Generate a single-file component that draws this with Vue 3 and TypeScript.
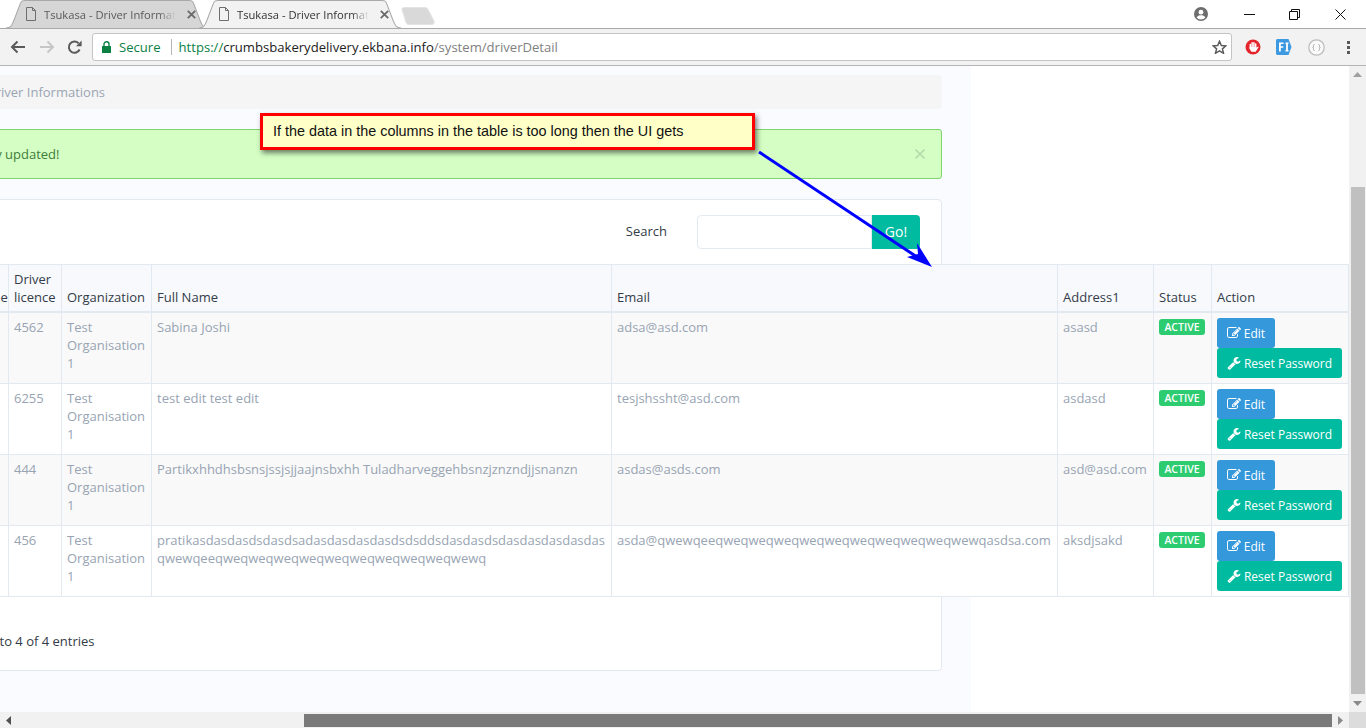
<script setup lang="ts">
interface Driver {
  no: number
  phone: string
  licence: string
  organization: string
  fullName: string
  email: string
  address: string
}

const drivers: Driver[] = [
  { no: 1, phone: '98', licence: '4562', organization: 'Test Organisation 1', fullName: 'Sabina Joshi', email: 'adsa@asd.com', address: 'asasd' },
  { no: 2, phone: '98', licence: '6255', organization: 'Test Organisation 1', fullName: 'test edit test edit', email: 'tesjshssht@asd.com', address: 'asdasd' },
  { no: 3, phone: '98', licence: '444', organization: 'Test Organisation 1', fullName: 'Partikxhhdhsbsnsjssjsjjaajnsbxhh Tuladharveggehbsnzjznzndjjsnanzn', email: 'asdas@asds.com', address: 'asd@asd.com' },
  { no: 4, phone: '98', licence: '456', organization: 'Test Organisation 1', fullName: 'pratikasdasdasdsdasdsadasdasdasdasdsdsddsdasdasdsdasdasdasdasdas qwewqeeqweqweqweqweqweqweqweqweqweqwewq', email: 'asda@qwewqeeqweqweqweqweqweqweqweqweqweqwewqasdsa.com', address: 'aksdjsakd' }
]

const wrench = 'M448 1472q0-26-19-45t-45-19-45 19-19 45 19 45 45 19 45-19 19-45zm644-420l-682 682q-37 37-90 37-52 0-91-37l-106-108q-38-36-38-90 0-53 38-91l681-681q39 98 114.5 173.5t173.5 114.5zm634-435q0 39-23 106-47 134-164.5 217.5t-258.5 83.5q-185 0-316.5-131.5t-131.5-316.5 131.5-316.5 316.5-131.5q58 0 121.5 16.5t107.5 46.5q16 11 16 28t-16 28l-293 169v224l193 107q5-3 79-48.5t135.5-81 70.5-35.5q15 0 23.5 10t8.5 25z'
const pencil = 'M888 1184l116-116-152-152-116 116v56h96v96h56zm440-720q-16-16-33 1l-350 350q-17 17-1 33t33-1l350-350q17-17 1-33zm80 594v190q0 119-84.5 203.5t-203.5 84.5h-832q-119 0-203.5-84.5t-84.5-203.5v-832q0-119 84.5-203.5t203.5-84.5h832q63 0 117 25 15 7 18 23 3 17-9 29l-49 49q-14 14-32 8-23-6-45-6h-832q-66 0-113 47t-47 113v832q0 66 47 113t113 47h832q66 0 113-47t47-113v-126q0-13 9-22l64-64q15-15 35-7t20 29zm-96-738l288 288-672 672h-288v-288zm444 132l-92 92-288-288 92-92q28-28 68-28t68 28l152 152q28 28 28 68t-28 68z'
</script>

<template>
  <div class="browser">
    <div class="tabstrip">
      <div v-for="(t, i) in [0, 1]" :key="t" :class="['tab', i === 1 ? 'active' : '']">
        <svg class="tab-shape" viewBox="0 0 200 28" preserveAspectRatio="none">
          <path d="M0 28 C5 28 6 25 8 20 L14 4 C15 1 16 0.5 19 0.5 L181 0.5 C184 0.5 185 1 186 4 L192 20 C194 25 195 28 200 28" />
        </svg>
        <svg class="doc" width="12" height="14" viewBox="0 0 12 14" fill="none" stroke="#6e6e6e">
          <path d="M1.5 .5h6l3 3v10h-9zM7.5 .5v3h3" />
        </svg>
        <span class="tab-title">Tsukasa - Driver Informat</span>
        <svg class="tab-x" width="9" height="9" viewBox="0 0 9 9" stroke="#6a6a6a" stroke-width="1.8">
          <path d="M.8 .8l7.4 7.4M8.2 .8L.8 8.2" />
        </svg>
      </div>
      <svg class="newtab" width="34" height="18" viewBox="0 0 34 18">
        <path d="M1 2.5C1 1 2 .5 3 .5H24c1.500 0 2 .5 3 2L33 14c.8 2-.5 3.500-2 3.500H8c-1.500 0-2.200-.5-3-2z" fill="#d9d9d9" stroke="#e4e4e4" />
      </svg>
      <div class="window-ctrls">
        <svg class="account" width="14" height="14" viewBox="0 0 14 14">
          <circle cx="7" cy="7" r="7" fill="#6e6e6e" />
          <circle cx="7" cy="5.200" r="2.400" fill="#fff" />
          <path d="M2.600 10.500C3.500 8.800 5.200 8.300 7 8.300s3.500.5 4.400 2.200C10.300 11.800 8.800 12.400 7 12.400s-3.300-.6-4.400-1.900z" fill="#fff" />
        </svg>
        <svg class="min" width="11" height="11" viewBox="0 0 11 11" stroke="#111"><path d="M0 5.500h11" /></svg>
        <svg class="restore" width="11" height="11" viewBox="0 0 11 11" fill="none" stroke="#111"><path d="M.5 2.500h8v8h-8zM2.500 2.500v-2h8v8h-2" /></svg>
        <svg class="close" width="11" height="11" viewBox="0 0 11 11" stroke="#111"><path d="M.5 .5l10 10M10.500 .5l-10 10" /></svg>
      </div>
    </div>

    <div class="toolbar">
      <svg class="nav" width="16" height="14" viewBox="0 0 16 14" fill="none" stroke="#5a5a5a" stroke-width="2">
        <path d="M15 7H2M7.500 1.500L2 7l5.500 5.500" />
      </svg>
      <svg class="nav fwd" width="16" height="14" viewBox="0 0 16 14" fill="none" stroke="#c6c6c6" stroke-width="2">
        <path d="M1 7h13M8.500 1.500L14 7l-5.500 5.500" />
      </svg>
      <svg class="nav" width="15" height="15" viewBox="0 0 15 15" fill="none">
        <path d="M12.600 9.500A5.600 5.600 0 1 1 11.500 3.300" stroke="#5a5a5a" stroke-width="2" />
        <path d="M9 6.200h5.600V.6z" fill="#5a5a5a" />
      </svg>
      <div class="omnibox">
        <svg class="lock" width="9" height="12" viewBox="0 0 9 12">
          <path d="M0 5h9v7H0z" fill="#0b8043" />
          <path d="M2 5V3.200a2.500 2.500 0 0 1 5 0V5" fill="none" stroke="#0b8043" stroke-width="1.400" />
        </svg>
        <span class="secure">Secure</span>
        <span class="omni-sep"></span>
        <span class="url"><span class="proto">https://</span><span class="host">crumbsbakerydelivery.ekbana.info</span><span class="path">/system/driverDetail</span></span>
        <svg class="star" width="15" height="14" viewBox="0 0 24 23" fill="none" stroke="#5a5a5a" stroke-width="2.400">
          <path d="M12 2l3 7 7.500.6-5.700 4.900 1.800 7.300L12 18l-6.600 3.800 1.800-7.300L1.500 9.600 9 9z" />
        </svg>
      </div>
      <svg class="ext opera" width="16" height="16" viewBox="0 0 16 16">
        <circle cx="8" cy="8" r="7.500" fill="#e3242b" />
        <path d="M5.300 9V5.500M7.100 8V3.800M8.900 8V3.800M10.700 9V5" stroke="#fff" stroke-width="1.500" stroke-linecap="round" />
        <path d="M4.600 8h6.800v1l1.600-1.600.7.700-3 4.600H6.400L4.600 10z" fill="#fff" />
      </svg>
      <svg class="ext fi" width="16" height="16" viewBox="0 0 16 16">
        <path d="M0 1.500C0 .7.700 0 1.500 0h11l3 8-3 8h-11C.7 16 0 15.300 0 14.500z" fill="#3d9ae0" />
        <path d="M3 3.500h4.500v1.500H4.800v2.300h2.400v1.500H4.800v3.700H3zM9.500 3.500h3V5h-.6v6h.6v1.500h-3V11h.6V5h-.6z" fill="#fff" />
      </svg>
      <svg class="ext json" width="17" height="17" viewBox="0 0 17 17" fill="none">
        <circle cx="8.500" cy="8.500" r="7.700" stroke="#bdbdbd" stroke-width="1.300" fill="#fafafa" />
        <path d="M6.500 5.500c-1.200 0-1 1-1 2 0 .7-.3 1-.8 1 .5 0 .8.300.8 1 0 1-.2 2 1 2M10.500 5.500c1.200 0 1 1 1 2 0 .7.300 1 .8 1-.5 0-.8.300-.8 1 0 1 .2 2-1 2" stroke="#aaa" />
      </svg>
      <div class="menu-dots"><i></i><i></i><i></i></div>
    </div>

    <div class="viewport">
      <div class="page">
        <div class="breadcrumb">Home / Driver Informations</div>
        <div class="alert">
          <span>Successfully updated!</span>
          <svg width="10" height="10" viewBox="0 0 10 10" stroke="#b5dcab" stroke-width="1.600"><path d="M.5 .5l9 9M9.500 .5l-9 9" /></svg>
        </div>
        <div class="card">
          <div class="search-row">
            <label class="search-label">Search</label>
            <input class="search-input" type="text" />
            <button class="go-btn">Go!</button>
          </div>
          <table class="drivers">
            <colgroup>
              <col style="width: 52px" />
              <col style="width: 45px" />
              <col style="width: 53px" />
              <col style="width: 90px" />
              <col style="width: 460px" />
              <col style="width: 446px" />
              <col style="width: 96px" />
              <col style="width: 58px" />
              <col style="width: 137px" />
            </colgroup>
            <thead>
              <tr>
                <th>S.N.</th>
                <th>Phone</th>
                <th>Driver licence</th>
                <th>Organization</th>
                <th>Full Name</th>
                <th>Email</th>
                <th>Address1</th>
                <th>Status</th>
                <th>Action</th>
              </tr>
            </thead>
            <tbody>
              <tr v-for="d in drivers" :key="d.no">
                <td>{{ d.no }}</td>
                <td>{{ d.phone }}</td>
                <td>{{ d.licence }}</td>
                <td>{{ d.organization }}</td>
                <td>{{ d.fullName }}</td>
                <td>{{ d.email }}</td>
                <td>{{ d.address }}</td>
                <td><span class="badge">ACTIVE</span></td>
                <td class="actions">
                  <button class="btn edit">
                    <svg width="14" height="14" viewBox="0 0 1792 1792" fill="currentColor"><path :d="pencil" /></svg>
                    Edit
                  </button>
                  <button class="btn reset">
                    <svg width="14" height="14" viewBox="0 0 1792 1792" fill="currentColor"><path :d="wrench" /></svg>
                    Reset Password
                  </button>
                </td>
              </tr>
            </tbody>
          </table>
          <div class="info">Showing 1 to 4 of 4 entries</div>
        </div>
      </div>

      <div class="callout">If the data in the columns in the table is too long then the UI gets</div>
      <svg class="arrow" width="200" height="130" viewBox="0 0 200 130">
        <path d="M3 3L164 110" stroke="#0000ff" stroke-width="3" fill="none" />
        <path d="M176 118L151 108L162 105L161 94z" fill="#0000ff" />
      </svg>

      <div class="vscroll">
        <svg width="9" height="5" viewBox="0 0 9 5"><path d="M4.500 0L9 5H0z" fill="#a0a0a0" /></svg>
        <div class="vthumb"></div>
        <svg width="9" height="5" viewBox="0 0 9 5"><path d="M0 0h9L4.500 5z" fill="#8a8a8a" /></svg>
      </div>
      <div class="hscroll">
        <svg width="5" height="9" viewBox="0 0 5 9"><path d="M5 0v9L0 4.500z" fill="#505050" /></svg>
        <div class="hthumb"></div>
        <svg width="5" height="9" viewBox="0 0 5 9"><path d="M0 0v9l5-4.500z" fill="#8a8a8a" /></svg>
      </div>
      <div class="corner"></div>
    </div>
  </div>
</template>

<style scoped>
.browser {
  width: 1366px;
  height: 728px;
  display: flex;
  flex-direction: column;
  overflow: hidden;
  font-family: "Open Sans", sans-serif;
  background: #fff;
}

/* tabs */
.tabstrip {
  height: 28px;
  flex: none;
  display: flex;
  align-items: flex-end;
  padding-left: 6px;
  background: #fff;
  position: relative;
}
.tab {
  width: 202px;
  height: 28px;
  margin-right: -9px;
  position: relative;
  display: flex;
  align-items: center;
  padding-left: 26px;
  box-sizing: border-box;
  font-size: 11.200px;
  color: #5a5a5a;
}
.tab.active {
  color: #333;
  z-index: 1;
}
.tab-shape {
  position: absolute;
  left: 0;
  top: 0;
  width: 100%;
  height: 100%;
}
.tab-shape path {
  fill: #d6d6d6;
  stroke: #a9a9a9;
}
.tab.active .tab-shape path {
  fill: #f2f2f2;
}
.doc, .tab-title, .tab-x {
  position: relative;
}
.tab-title {
  width: 132px;
  margin-left: -6px;
  padding-left: 13px;
  white-space: nowrap;
  overflow: hidden;
  -webkit-mask-image: linear-gradient(to right, #000 88%, transparent);
  mask-image: linear-gradient(to right, #000 88%, transparent);
}
.doc {
  flex: none;
  margin-left: -7px;
}
.tab-x {
  margin-left: 11px;
  flex: none;
}
.newtab {
  margin: 0 0 3px 9px;
}
.window-ctrls {
  margin-left: auto;
  align-self: center;
  display: flex;
  align-items: center;
  padding-right: 20px;
}
.account { margin-right: 36px; }
.min { margin-right: 34px; }
.restore { margin-right: 35px; }

/* toolbar */
.toolbar {
  height: 38px;
  flex: none;
  box-sizing: border-box;
  background: #f2f2f2;
  border-top: 1px solid #a9a9a9;
  border-bottom: 1px solid #b4b4b4;
  display: flex;
  align-items: center;
  padding-left: 10px;
}
.nav { margin-right: 13px; flex: none; }
.nav.fwd { margin-right: 12px; }
.omnibox {
  width: 1140px;
  height: 28px;
  margin-left: -3px;
  flex: none;
  box-sizing: border-box;
  display: flex;
  align-items: center;
  background: #fff;
  border: 1px solid #c4c4c4;
  border-radius: 3px;
  padding-left: 9px;
  font-size: 13.100px;
}
.secure { color: #0b8043; margin-left: 8px; }
.omni-sep {
  width: 1px;
  height: 16px;
  background: #b5b5b5;
  margin: 0 7px 0 10px;
}
.url { white-space: nowrap; }
.proto { color: #0b8043; }
.host { color: #222; }
.path { color: #808080; }
.star { margin-left: auto; margin-right: 4px; }
.ext { flex: none; }
.opera { margin-left: 13px; }
.fi { margin-left: 15px; }
.json { margin-left: 16px; }
.menu-dots {
  margin-left: 22px;
  display: flex;
  flex-direction: column;
  gap: 2px;
}
.menu-dots i {
  width: 3px;
  height: 3px;
  background: #5a5a5a;
}

/* page */
.viewport {
  flex: 1;
  position: relative;
  overflow: hidden;
  background: #fff;
}
.page {
  width: 1071px;
  height: 100%;
  margin-left: -100px;
  box-sizing: border-box;
  padding: 9px 29px 0 10px;
  background: #fafbfe;
  font-size: 13px;
  line-height: 18px;
}
.breadcrumb {
  height: 34px;
  box-sizing: border-box;
  padding: 8px 15px 8px 28px;
  background: #f5f5f5;
  border-radius: 4px;
  color: #9aa5b4;
  white-space: nowrap;
}
.alert {
  height: 50px;
  margin-top: 20px;
  box-sizing: border-box;
  padding: 0 16px 0 18px;
  display: flex;
  align-items: center;
  justify-content: space-between;
  background: #d4fec3;
  border: 1px solid #7fd56f;
  border-radius: 3px;
  color: #3f7d3a;
}
.card {
  margin-top: 20px;
  height: 472px;
  box-sizing: border-box;
  background: #fff;
  border: 1px solid #e3e9f1;
  border-radius: 4px;
  padding-top: 15px;
}
.search-row {
  display: flex;
  align-items: center;
  justify-content: flex-end;
  padding-right: 21px;
  height: 34px;
  color: #333c47;
  margin-bottom: 15px;
}
.search-label { margin-right: 30px; padding-bottom: 2px; font-weight: 500; }
.search-input {
  width: 175px;
  height: 34px;
  box-sizing: border-box;
  border: 1px solid #e3e9f1;
  border-radius: 4px 0 0 4px;
  background: #fff;
  outline: none;
}
.go-btn {
  width: 48px;
  height: 34px;
  border: none;
  background: #00bb9f;
  color: #fff;
  font: inherit;
  font-size: 14px;
  border-radius: 0 4px 4px 0;
  padding: 0;
}
.drivers {
  table-layout: fixed;
  width: 1437px;
  border-collapse: collapse;
  color: #98a4b3;
}
.drivers th, .drivers td {
  border: 1px solid #e3e9f1;
  padding: 5px;
  vertical-align: top;
  text-align: left;
}
.drivers th {
  vertical-align: bottom;
  background: #f8f9fd;
  color: #333c47;
  font-weight: 500;
  border-bottom-width: 2px;
}
.drivers tbody tr:nth-child(odd) {
  background: #f9f9f9;
}
.drivers tbody tr:nth-child(even) {
  background: #fff;
}
.badge {
  display: block;
  width: 46px;
  height: 16px;
  margin-top: 1px;
  background: #2ecc71;
  color: #fff;
  border-radius: 3px;
  font-size: 10.500px;
  font-weight: 600;
  line-height: 16px;
  text-align: center;
}
.actions {
  font-size: 0;
}
.btn {
  display: inline-flex;
  align-items: center;
  justify-content: center;
  gap: 3px;
  height: 30px;
  padding: 0;
  border: none;
  border-radius: 3px;
  color: #fff;
  font-family: inherit;
  font-size: 12px;
  vertical-align: top;
}
.btn.edit {
  width: 58px;
  background: #3498db;
}
.btn.reset {
  width: 125px;
  background: #00bb9f;
}
.info {
  margin: 35px 0 0 23px;
  color: #333c47;
  font-weight: 500;
  white-space: nowrap;
}

/* annotation */
.callout {
  position: absolute;
  left: 260px;
  top: 47px;
  width: 495px;
  height: 37px;
  box-sizing: border-box;
  border: 3px solid #ff0000;
  background: #ffffc8;
  box-shadow: 2px 3px 5px rgba(0, 0, 0, 0.5);
  padding: 6px 0 0 10px;
  font-family: "Liberation Sans", Arial, sans-serif;
  font-size: 14.400px;
  line-height: 18px;
  color: #111;
  white-space: nowrap;
}
.arrow {
  position: absolute;
  left: 756px;
  top: 83px;
}

/* scrollbars */
.vscroll {
  position: absolute;
  right: 0;
  top: 0;
  bottom: 16px;
  width: 17px;
  background: #f1f1f1;
  display: flex;
  flex-direction: column;
  align-items: center;
  justify-content: space-between;
  padding: 6px 0;
  box-sizing: border-box;
}
.vthumb {
  position: absolute;
  left: 2px;
  right: 1px;
  top: 121px;
  height: 507px;
  background: #c0c0c0;
}
.hscroll {
  position: absolute;
  left: 0;
  right: 17px;
  bottom: 0;
  height: 16px;
  background: #f1f1f1;
  display: flex;
  align-items: center;
  justify-content: space-between;
  padding: 0 6px;
  box-sizing: border-box;
}
.hthumb {
  position: absolute;
  left: 304px;
  top: 2px;
  width: 1028px;
  height: 13px;
  background: #7a7a7a;
}
.corner {
  position: absolute;
  right: 0;
  bottom: 0;
  width: 17px;
  height: 16px;
  background: #dcdcdc;
}
</style>
